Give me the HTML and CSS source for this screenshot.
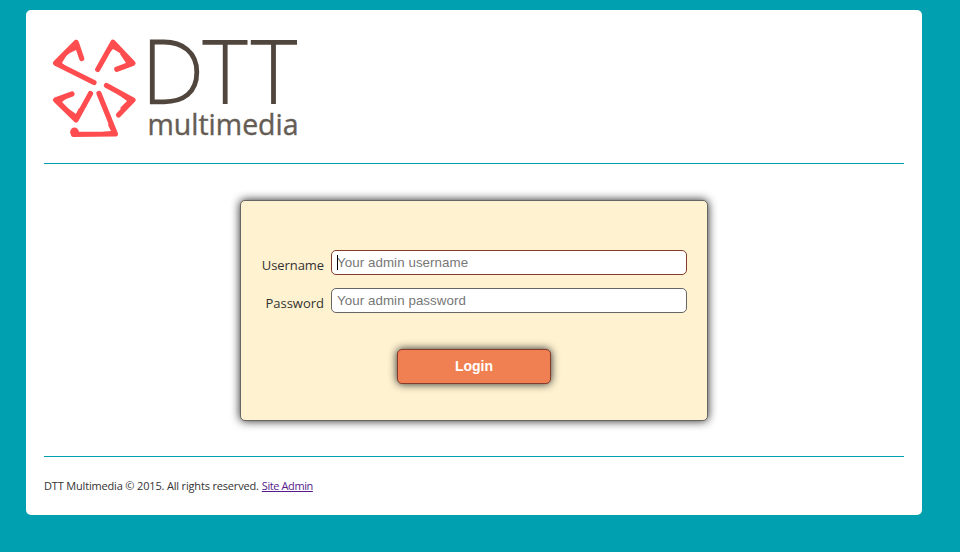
FILE: index.html
```html
<!DOCTYPE html>
<html lang="en">
<head>
<meta charset="utf-8">
<title>DTT Multimedia</title>
<link rel="stylesheet" href="styles.css">
</head>
<body>
<div class="page">
  <header class="header">
    <svg class="logo" viewBox="0 0 270 115" role="img" aria-label="DTT multimedia">
      <g class="mark">
        <path d="M41.700 28.500 L36.200 12.300 L15.500 33.200 L54 52.500"/>
        <path d="M57.700 39.500 L73 12.300 L93 33.200 L76.800 39.300"/>
        <path d="M66.500 55.500 L93 70 L78.500 85"/>
        <path d="M50.500 63.500 L36 90 L15.500 70 L32 64"/>
        <path d="M59 63.500 L75.400 104 L33.500 104.300"/>
        <path class="corner" d="M28 18 L36 11 L41 24 L36 20 L28 24 Z M15 33 L23 24 L26 26 L22 33 L29 39 Z M67 20 L73 11 L82 20 L80 23 L73 19 L68 24 Z M84 22 L94 33 L83 38 L83 35 L86 33 L80 24 Z M94 70 L81 62 L79 65 L87 71 L80 78 L84 81 Z M36 91 L26 81 L29 79 L36 84 L39 78 L42 81 Z M15 70 L26 65 L27 68 L22 72 L29 79 L25 81 Z M76 105 L71 91 L68 95 L71 101 L62 102 L62 105 Z"/>
        <circle cx="34.500" cy="102" r="4.400"/>
      </g>
      <g class="letters">
        <path d="M112.300 12 H124 C142 12 156.800 22 156.800 42 C156.800 63 143 71.800 124 71.800 H112.300 Z"/>
        <path d="M162.500 12.300 H207.500 M185.200 12 V74 M210.800 12.300 H257 M233.500 12 V74"/>
      </g>
      <text class="subname" x="107.500" y="104.600" textLength="151" lengthAdjust="spacingAndGlyphs">multimedia</text>
    </svg>
  </header>
  <main class="main">
    <form class="login">
      <div class="row">
        <label class="label user" for="username">Username</label>
        <div class="field active"><input id="username" type="text" placeholder="Your admin username"><span class="caret"></span></div>
      </div>
      <div class="row">
        <label class="label pass" for="password">Password</label>
        <div class="field"><input id="password" type="password" placeholder="Your admin password"></div>
      </div>
      <button class="submit" type="button">Login</button>
    </form>
  </main>
  <footer class="footer"><span class="copy">DTT Multimedia © 2015. All rights reserved.</span><a class="admin" href="#">Site Admin</a></footer>
</div>
</body>
</html>
```
FILE: styles.css
```css
* { box-sizing: border-box; }
body {
  margin: 0;
  background: #00a0b1;
  color: #333;
  font-family: "Trebuchet MS", "Open Sans", sans-serif;
}
.page {
  width: 896px;
  height: 505px;
  margin: 10px 0 0 26px;
  padding: 0 18px;
  background: #fff;
  border-radius: 5px;
}
.header {
  height: 154px;
  padding-top: 20px;
  border-bottom: 1px solid #00a0b1;
}
.logo { display: block; width: 270px; height: 115px; margin-left: -4px; }
.mark path { fill: none; stroke: #ff4d4f; stroke-width: 5.2; stroke-linecap: round; stroke-linejoin: round; }
.mark .corner { fill: #ff4d4f; stroke: none; }
.mark circle { fill: #ff4d4f; }
.letters path { fill: none; stroke: #51463d; stroke-width: 4.8; }
.subname { font: 29.5px "Open Sans", sans-serif; fill: #655d55; stroke: #655d55; stroke-width: 0.4; }
.main { height: 293px; padding-top: 36px; border-bottom: 1px solid #00a0b1; }
.login {
  width: 468px;
  height: 221px;
  margin-left: 196px;
  padding: 49px 20px 0 0;
  background: #fff2d0;
  border: 1px solid #666;
  border-radius: 5px;
  box-shadow: 0 0 10px #222;
}
.row { display: flex; justify-content: flex-end; height: 25px; margin-bottom: 13px; }
.label { padding-top: 6px; margin-right: 7px; font-size: 13px; line-height: 18px; white-space: nowrap; }
.user { letter-spacing: -0.08px; }
.field { position: relative; width: 356px; height: 25px; background: #fff; border: 1px solid #666; border-radius: 5px; }
.active { border-color: #843b2b; }
.field input {
  display: block;
  width: 100%;
  height: 23px;
  padding: 0 5px;
  border: 0;
  outline: 0;
  background: transparent;
  font: 13.333px "Liberation Sans", Arial, sans-serif;
  letter-spacing: 0.07px;
}
.field input::placeholder { color: #777; opacity: 1; }
.caret { position: absolute; left: 5px; top: 4px; width: 1px; height: 15px; background: #000; }
.submit {
  display: block;
  width: 154px;
  height: 35px;
  margin: 36px 0 0 156px;
  padding: 0 0 1px;
  border: 1px solid #843b2b;
  border-radius: 5px;
  background: #f07f52;
  box-shadow: 0 0 8px #222;
  color: #fff;
  font: bold 14px "Liberation Sans", Arial, sans-serif;
}
.footer { display: flex; gap: 3px; padding-top: 21px; font-size: 11px; line-height: 16px; white-space: nowrap; }
.copy { letter-spacing: -0.17px; }
.admin { color: #551a8b; letter-spacing: -0.4px; }
```
